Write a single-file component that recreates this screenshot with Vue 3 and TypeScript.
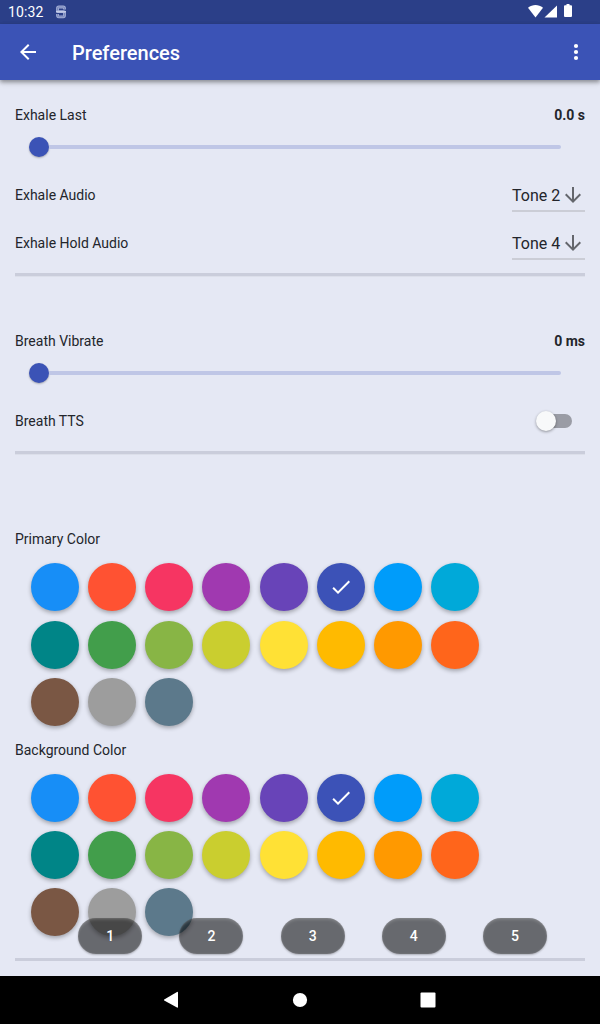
<script setup lang="ts">
import { ref } from 'vue'

interface Swatch {
  name: string
  value: string
}

const palette: Swatch[] = [
  { name: 'Blue', value: '#178ef7' },
  { name: 'Red', value: '#ff5232' },
  { name: 'Pink', value: '#f63562' },
  { name: 'Purple', value: '#a039b0' },
  { name: 'Deep purple', value: '#6844b8' },
  { name: 'Indigo', value: '#3c52b7' },
  { name: 'Light blue', value: '#009cfa' },
  { name: 'Cyan', value: '#00a9d9' },
  { name: 'Teal', value: '#008587' },
  { name: 'Green', value: '#429e4b' },
  { name: 'Light green', value: '#88b545' },
  { name: 'Lime', value: '#cace2f' },
  { name: 'Yellow', value: '#ffe135' },
  { name: 'Amber', value: '#ffba00' },
  { name: 'Orange', value: '#ff9900' },
  { name: 'Deep orange', value: '#ff651b' },
  { name: 'Brown', value: '#7a5744' },
  { name: 'Grey', value: '#9d9d9d' },
  { name: 'Blue grey', value: '#5c798b' },
]

const primary = ref<number>(5)
const background = ref<number>(5)
const groups = [
  { title: 'Primary Color', selected: primary },
  { title: 'Background Color', selected: background },
]
const presets: number[] = [1, 2, 3, 4, 5]
const tones = [
  { label: 'Exhale Audio', value: 'Tone 2' },
  { label: 'Exhale Hold Audio', value: 'Tone 4' },
]
</script>

<template>
  <div class="screen">
    <header class="status">
      <span class="clock">10:32</span>
      <svg class="notice" width="12" height="16" viewBox="0 0 12 16" fill="none">
        <path d="M9.500 5.500V4.200Q9.500 3 8.300 3H3.700Q2.500 3 2.500 4.200V6.500Q2.500 7.700 3.700 7.700H8.300Q9.500 7.700 9.500 8.900V11.500Q9.500 12.800 8.300 12.800H3.700Q2.500 12.800 2.500 11.500V10" stroke="#a3aed6" stroke-width="2.800" />
        <path d="M9.500 5.500V4.200Q9.500 3 8.300 3H3.700Q2.500 3 2.500 4.200V6.500M9.500 9V11.500Q9.500 12.800 8.300 12.800H3.700Q2.500 12.800 2.500 11.500V10" stroke="#6c7cb4" stroke-width=".8" />
        <path d="M1 7.700H11" stroke="#c3cbe6" stroke-width="1.600" />
      </svg>
      <svg class="signals" width="46" height="16" viewBox="0 0 46 16" fill="#fff">
        <path d="M0 3.800C4.500.2 10.500.2 15 3.800L7.500 13.500Z" />
        <path d="M29 1.500V13.500H16.500Z" />
        <path d="M38.500 0H41.500V1.200H43Q44 1.200 44 2.200V12Q44 13 43 13H37Q36 13 36 12V2.200Q36 1.200 37 1.200H38.500Z" />
      </svg>
    </header>

    <nav class="appbar">
      <svg width="24" height="24" viewBox="0 0 24 24" fill="#fff">
        <path d="M20 11H7.830l5.590-5.590L12 4l-8 8 8 8 1.410-1.410L7.830 13H20z" />
      </svg>
      <h1>Preferences</h1>
      <svg class="more" width="24" height="24" viewBox="0 0 24 24" fill="#fff">
        <circle cx="12" cy="6" r="2.100" />
        <circle cx="12" cy="12" r="2.100" />
        <circle cx="12" cy="18" r="2.100" />
      </svg>
    </nav>

    <main class="content">
      <section class="exhale">
        <div class="caption"><span>Exhale Last</span><b>0.0 s</b></div>
        <div class="slider"><i class="knob"></i><i class="rail"></i></div>
        <div v-for="tone in tones" :key="tone.label" class="setting">
          <span>{{ tone.label }}</span>
          <div class="select">
            <span>{{ tone.value }}</span>
            <svg width="24" height="24" viewBox="0 0 24 24" fill="#64666c">
              <path d="M20 12l-1.410-1.410L13 16.170V4h-2v12.170l-5.580-5.590L4 12l8 8 8-8z" />
            </svg>
          </div>
        </div>
        <div class="divider"></div>
      </section>

      <section class="breath">
        <div class="caption"><span>Breath Vibrate</span><b>0 ms</b></div>
        <div class="slider"><i class="knob"></i><i class="rail"></i></div>
        <div class="setting">
          <span>Breath TTS</span>
          <div class="toggle"><i></i></div>
        </div>
        <div class="divider"></div>
      </section>

      <section v-for="group in groups" :key="group.title" class="colors">
        <h2>{{ group.title }}</h2>
        <div class="swatches">
          <button
            v-for="(color, index) in palette"
            :key="color.name"
            class="swatch"
            :style="{ backgroundColor: color.value }"
            :aria-label="color.name"
            @click="group.selected.value = index"
          >
            <svg v-if="group.selected.value === index" width="24" height="24" viewBox="0 0 24 24" fill="#fff">
              <path d="M9 16.170L4.830 12l-1.420 1.410L9 19 21 7l-1.410-1.410z" />
            </svg>
          </button>
        </div>
      </section>
      <div class="divider"></div>
    </main>

    <div class="presets">
      <button v-for="preset in presets" :key="preset">{{ preset }}</button>
    </div>

    <footer class="system">
      <svg width="16" height="18" viewBox="0 0 16 18" fill="#fff"><path d="M.2 8.500L13 .9Q14 .4 14 1.400V16Q14 17 13 16.500L.2 9.500Q-.5 9 .2 8.500Z" /></svg>
      <svg width="16" height="18" viewBox="0 0 16 18" fill="#fff"><circle cx="8" cy="9" r="7.100" /></svg>
      <svg width="16" height="18" viewBox="0 0 16 18" fill="#fff"><rect x=".5" y="1.500" width="15" height="15" rx="1" /></svg>
    </footer>
  </div>
</template>

<style>
body {
  margin: 0;
}
</style>

<style scoped>
.screen {
  position: relative;
  box-sizing: border-box;
  display: flex;
  flex-direction: column;
  width: 600px;
  height: 1024px;
  overflow: hidden;
  background: #e5e8f4;
  color: #23252b;
  font: 14px/20px Roboto, sans-serif;
}
svg {
  display: block;
  flex: none;
}
button {
  padding: 0;
  border: 0;
  font: inherit;
}
.status {
  display: flex;
  flex: none;
  align-items: center;
  height: 24px;
  padding: 0 26px 0 8px;
  background: #2b3f88;
  color: #fff;
}
.clock {
  width: 47px;
  letter-spacing: 0.1px;
}
.signals {
  margin-left: auto;
}
.appbar {
  display: flex;
  flex: none;
  align-items: center;
  height: 56px;
  padding: 0 12px 0 16px;
  background: #3b53b6;
  color: #fff;
  box-shadow: 0 2px 4px rgba(0, 0, 0, 0.32), 0 3px 6px rgba(0, 0, 0, 0.12);
}
h1 {
  margin: 2px 0 0 32px;
  font-size: 20px;
  font-weight: 500;
  line-height: 28px;
}
.more {
  margin-left: auto;
}
.content {
  flex: 1;
  padding: 25px 15px 0;
}
.exhale {
  height: 226px;
}
.breath {
  height: 198.4px;
}
.caption,
.setting {
  display: flex;
  align-items: center;
  justify-content: space-between;
}
.caption {
  height: 20px;
}
.caption b {
  font-weight: 700;
}
.slider {
  display: flex;
  align-items: center;
  height: 44px;
  padding: 0 24px 0 14px;
}
.knob {
  width: 20px;
  height: 20px;
  border-radius: 50%;
  background: #3b53b6;
  box-shadow: 0 1px 2px rgba(0, 0, 0, 0.28);
}
.rail {
  flex: 1;
  height: 4px;
  border-radius: 0 2px 2px 0;
  background: #bfc6e6;
}
.slider + .setting {
  margin-top: 2px;
}
.setting {
  height: 48px;
}
.select {
  display: flex;
  box-sizing: border-box;
  align-items: center;
  justify-content: space-between;
  width: 73px;
  height: 34px;
  padding-top: 4px;
  border-bottom: 2px solid #cbcdd6;
  font-size: 16px;
}
.select svg {
  margin-top: -2px;
}
.toggle {
  width: 34px;
  height: 14px;
  margin-right: 13px;
  border-radius: 7px;
  background: #9a9ca5;
}
.toggle i {
  display: block;
  width: 20px;
  height: 20px;
  margin: -3px 0 0 -2px;
  border-radius: 50%;
  background: #f8f9fa;
  box-shadow: 0 1px 3px rgba(0, 0, 0, 0.38);
}
.divider {
  height: 3px;
  margin-top: 6px;
  background: #cacddb;
}
.setting + .divider {
  box-shadow: 0 1px #dcdfea;
}
.colors {
  height: 210.6px;
}
h2 {
  margin: 0;
  font-size: 14px;
  font-weight: 400;
  line-height: 20px;
}
.swatches {
  display: grid;
  grid-template-columns: repeat(8, 48px);
  gap: 9.15px;
  padding: 14px 0 0 16px;
}
.swatch {
  display: flex;
  align-items: center;
  justify-content: center;
  width: 48px;
  height: 48px;
  border-radius: 50%;
  box-shadow: 0 2px 4px rgba(0, 0, 0, 0.3);
}
.colors + .divider {
  margin-top: 7.4px;
}
.presets {
  position: absolute;
  left: 78.3px;
  right: 53px;
  top: 918px;
  display: flex;
  justify-content: space-between;
}
.presets button {
  width: 64px;
  height: 36px;
  border-radius: 18px;
  background: rgba(0, 0, 0, 0.55);
  color: #fff;
  font-weight: 500;
  box-shadow: 0 1px 2px rgba(0, 0, 0, 0.25), inset 0 3px 3px -1px rgba(255, 255, 255, 0.14), inset 0 0 2px rgba(255, 255, 255, 0.18);
}
.system {
  display: flex;
  flex: none;
  align-items: center;
  justify-content: center;
  gap: 112px;
  height: 48px;
  background: #000;
}
</style>
